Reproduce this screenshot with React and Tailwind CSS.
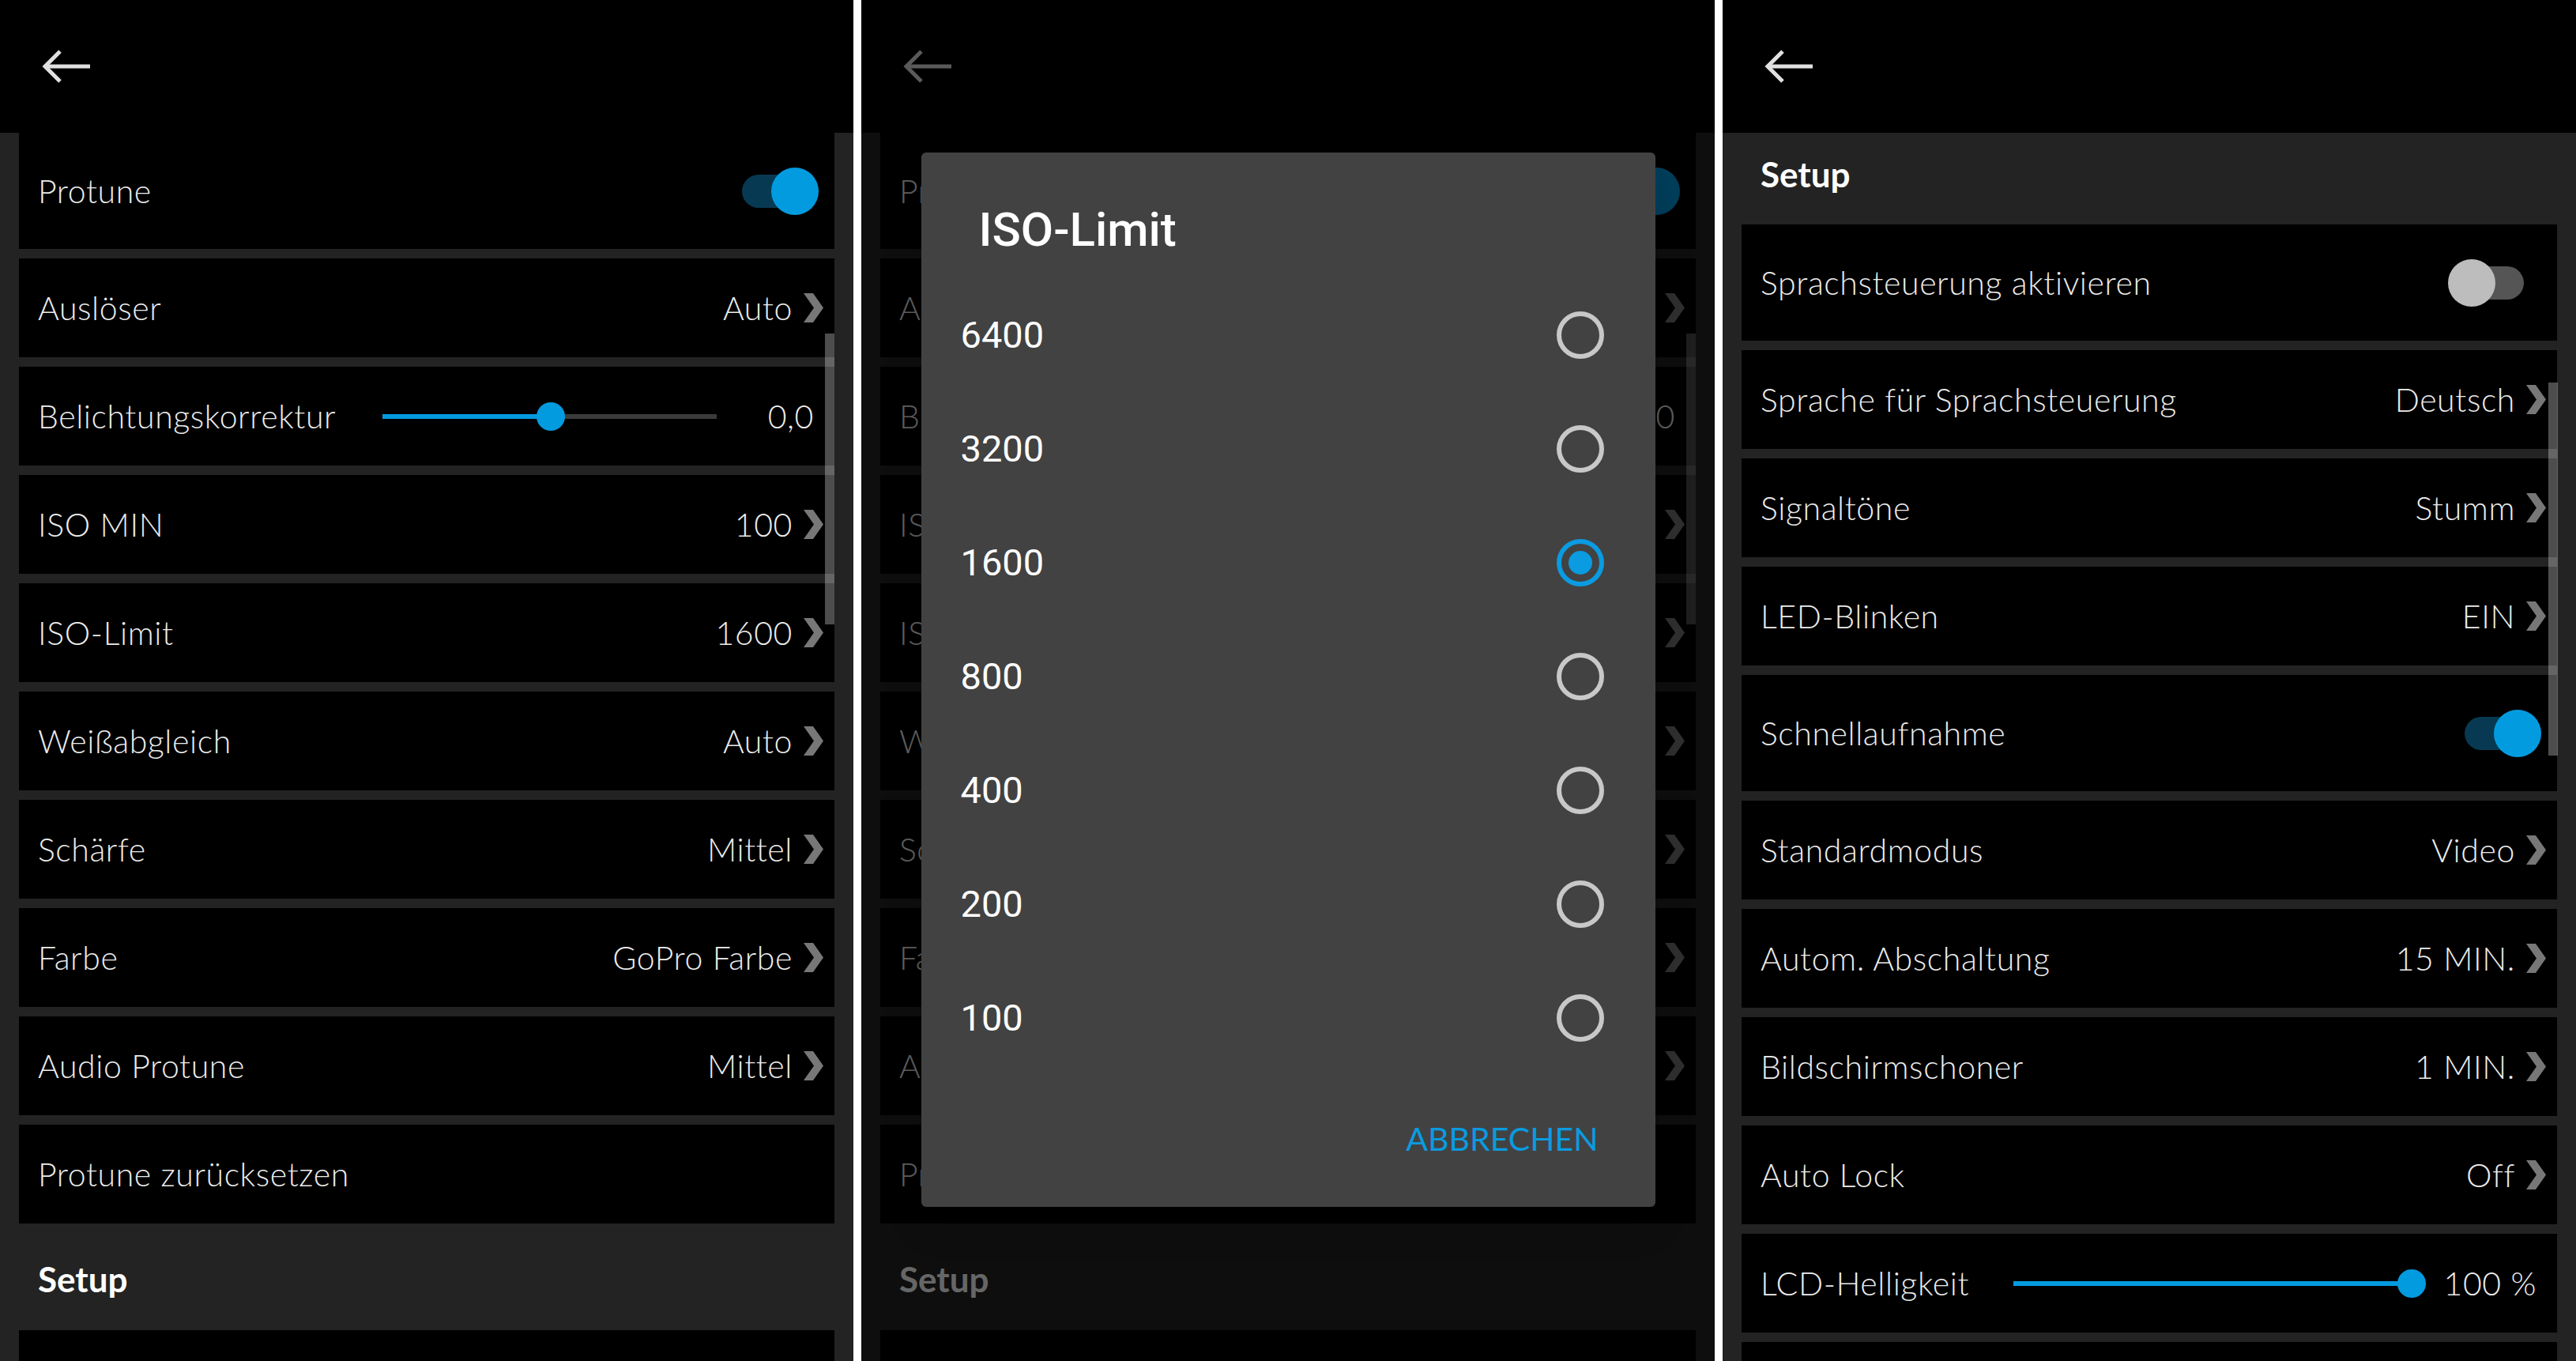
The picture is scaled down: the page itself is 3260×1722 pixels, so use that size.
const BLUE = 'bg-[#039be0]';

const BackArrow = () => (
  <svg width="68" height="48" viewBox="0 0 68 48" fill="none" stroke="#e0e0e0" strokeWidth="5">
    <path d="M7 24 H64" />
    <path d="M26 5 L7 24 L26 43" strokeLinejoin="miter" />
  </svg>
);

const Chevron = () => (
  <svg width="25" height="37" viewBox="0 0 25 37" className="ml-[14px] shrink-0">
    <polygon points="0,0 12,0 25,18.5 12,37 0,37 13,18.5" fill="#777777" />
  </svg>
);

const Header = () => (
  <div className="h-[168px] shrink-0 bg-black pl-[50px] pt-[60px]">
    <BackArrow />
  </div>
);

const Toggle = ({ on }) => (
  <div className="relative mr-[6px] h-[60px] w-[118px] shrink-0">
    <div
      className={`absolute left-[21px] top-[9px] h-[42px] w-[75px] rounded-full ${
        on ? 'bg-[#073a52]' : 'bg-[#555555]'
      }`}
    />
    <div
      className={`absolute top-0 h-[60px] w-[60px] rounded-full ${
        on ? 'left-[58px] bg-[#039be0]' : 'left-0 bg-[#bdbdbd]'
      }`}
    />
  </div>
);

const Slider = ({ pct, className }) => (
  <div className={`relative h-[36px] shrink-0 ${className}`}>
    <div className="absolute left-0 right-0 top-[15px] h-[6px] bg-[#3b3b3b]" />
    <div className={`absolute left-0 top-[15px] h-[6px] ${BLUE}`} style={{ width: `${pct}%` }} />
    <div
      className={`absolute top-0 h-[36px] w-[36px] -translate-x-1/2 rounded-full ${BLUE}`}
      style={{ left: `${pct}%` }}
    />
  </div>
);

const Row = ({ label, value, chevron = true, tall, toggle }) => (
  <div
    className={`flex shrink-0 items-center bg-black pl-[24px] pr-[14px] ${tall ? 'h-[147px]' : 'h-[125px]'}`}
  >
    <span className="flex-1 whitespace-nowrap">{label}</span>
    {value && <span className="whitespace-nowrap">{value}</span>}
    {value && chevron && <Chevron />}
    {toggle !== undefined && <Toggle on={toggle} />}
  </div>
);

const SliderRow = ({ label, labelW, sliderW, pct, value }) => (
  <div className="flex h-[125px] shrink-0 items-center bg-black pl-[24px] pr-[26px]">
    <span className={`shrink-0 whitespace-nowrap ${labelW}`}>{label}</span>
    <Slider pct={pct} className={sliderW} />
    <span className="flex-1 whitespace-nowrap text-right">{value}</span>
  </div>
);

const Section = ({ className }) => (
  <div
    className={`flex shrink-0 items-center pl-[24px] text-[44px] font-bold tracking-normal text-white ${className}`}
  >
    Setup
  </div>
);

const ProtuneList = () => (
  <div className="relative flex h-full flex-col bg-[#232323]">
    <Header />
    <div className="flex flex-col gap-[12px] px-[24px]">
      <Row label="Protune" tall toggle={true} />
      <Row label="Auslöser" value="Auto" />
      <SliderRow label="Belichtungskorrektur" labelW="w-[436px]" sliderW="w-[423px]" pct={50.3} value="0,0" />
      <Row label="ISO MIN" value="100" />
      <Row label="ISO-Limit" value="1600" />
      <Row label="Weißabgleich" value="Auto" />
      <Row label="Schärfe" value="Mittel" />
      <Row label="Farbe" value="GoPro Farbe" />
      <Row label="Audio Protune" value="Mittel" />
      <Row label="Protune zurücksetzen" />
      <Section className="h-[111px] pt-[4px]" />
      <div className="h-[125px] shrink-0 bg-black" />
    </div>
    <div className="absolute right-[24px] top-[422px] h-[368px] w-[12px] bg-white/30" />
  </div>
);

const Radio = ({ checked }) => (
  <div
    className={`flex h-[60px] w-[60px] items-center justify-center rounded-full border-[6px] ${
      checked ? 'border-[#0a9be0]' : 'border-[#c8c8c8]'
    }`}
  >
    {checked && <div className="h-[30px] w-[30px] rounded-full bg-[#0a9be0]" />}
  </div>
);

const IsoDialog = () => (
  <div className="w-[929px] rounded-[6px] bg-[#424242] pb-[56px] pt-[62px] tracking-normal shadow-2xl">
    <div className="pl-[73px] font-[Roboto,sans-serif] text-[60px] font-medium leading-[72px] text-white">ISO-Limit</div>
    <div className="mt-[25px] flex flex-col">
      {['6400', '3200', '1600', '800', '400', '200', '100'].map((v) => (
        <div key={v} className="flex h-[144px] items-center justify-between pl-[50px] pr-[65px]">
          <span className="font-[Roboto,sans-serif] text-[47px] font-normal text-white">{v}</span>
          <Radio checked={v === '1600'} />
        </div>
      ))}
    </div>
    <div className="mt-[51px] flex h-[60px] items-center justify-end pr-[72px] text-[41px] font-normal text-[#0a9be0]">
      ABBRECHEN
    </div>
  </div>
);

const SetupList = () => (
  <div className="relative flex h-full flex-col bg-[#232323]">
    <Header />
    <div className="flex flex-col gap-[12px] px-[24px]">
      <Section className="h-[104px]" />
      <Row label="Sprachsteuerung aktivieren" tall toggle={false} />
      <Row label="Sprache für Sprachsteuerung" value="Deutsch" />
      <Row label="Signaltöne" value="Stumm" />
      <Row label="LED-Blinken" value="EIN" />
      <Row label="Schnellaufnahme" tall toggle={true} />
      <Row label="Standardmodus" value="Video" />
      <Row label="Autom. Abschaltung" value="15 MIN." />
      <Row label="Bildschirmschoner" value="1 MIN." />
      <Row label="Auto Lock" value="Off" />
      <SliderRow label="LCD-Helligkeit" labelW="w-[320px]" sliderW="w-[504px]" pct={100} value="100 %" />
      <div className="h-[125px] shrink-0 bg-black" />
    </div>
    <div className="absolute right-[23px] top-[484px] h-[472px] w-[12px] bg-white/30" />
  </div>
);

export default function App() {
  return (
    <div className="flex h-[1722px] w-[3260px] gap-[10px] overflow-hidden bg-white font-[Lato,sans-serif] text-[41px] font-light tracking-[0.6px] text-[#ececec]">
      <div className="h-full w-[1080px] shrink-0 overflow-hidden">
        <ProtuneList />
      </div>
      <div className="relative h-full w-[1080px] shrink-0 overflow-hidden">
        <ProtuneList />
        <div className="absolute inset-0 flex items-start justify-center bg-black/60 pt-[193px]">
          <IsoDialog />
        </div>
      </div>
      <div className="h-full w-[1080px] shrink-0 overflow-hidden">
        <SetupList />
      </div>
    </div>
  );
}
